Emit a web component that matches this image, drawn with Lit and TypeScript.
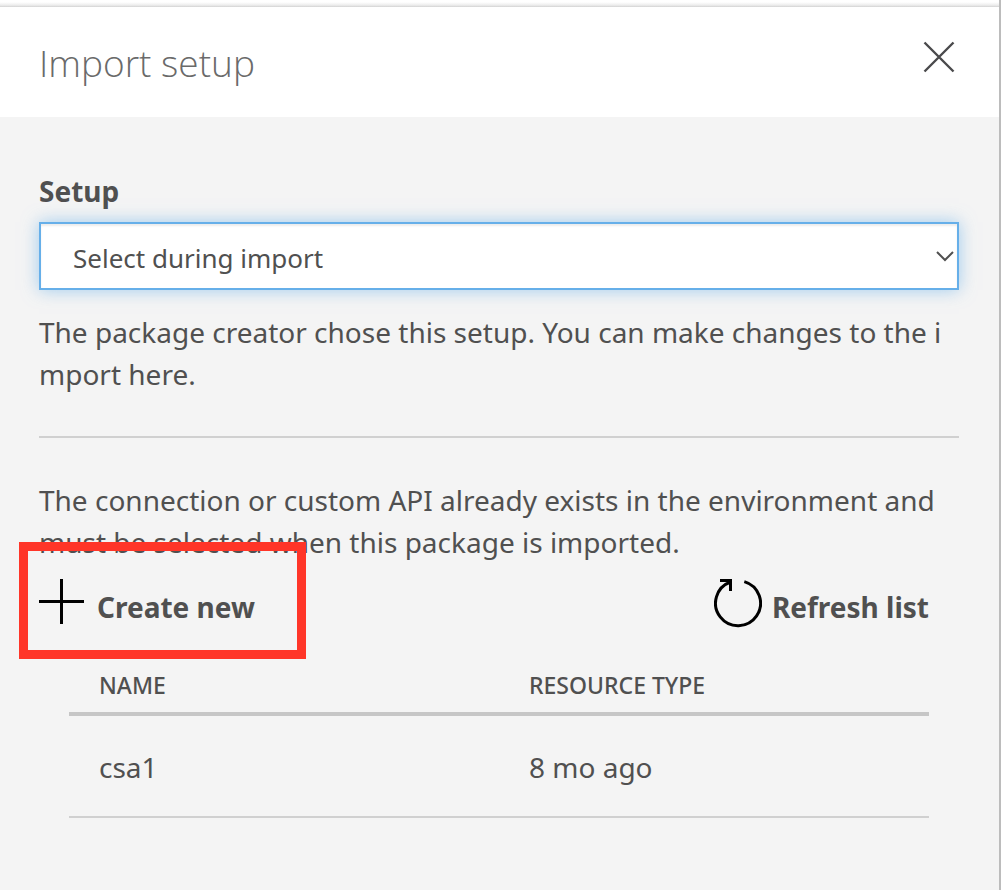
import { LitElement, html, css } from "lit";
import { customElement, property, state } from "lit/decorators.js";

interface Resource {
  name: string;
  type: string;
}

@customElement("resource-table")
class ResourceTable extends LitElement {
  @property({ attribute: false }) resources: Resource[] = [];

  static styles = css`
    :host {
      display: block;
    }
    .table {
      width: 100%;
      border-collapse: collapse;
      table-layout: fixed;
      text-align: left;
    }
    .heading {
      padding: 10px 30px 11px;
      border-bottom: 4px solid #c6c6c6;
      font-size: 23px;
      line-height: 32px;
      font-weight: 500;
      text-transform: uppercase;
    }
    .cell {
      padding: 30px 30px 28px;
      border-bottom: 2px solid #d0d0d0;
      line-height: 42px;
    }
  `;

  render() {
    return html`
      <table class="table">
        <thead>
          <tr>
            <th class="heading" scope="col">Name</th>
            <th class="heading" scope="col">Resource type</th>
          </tr>
        </thead>
        <tbody>
          ${this.resources.map(
            (r) => html`<tr>
              <td class="cell">${r.name}</td>
              <td class="cell">${r.type}</td>
            </tr>`
          )}
        </tbody>
      </table>
    `;
  }
}

@customElement("app-root")
class AppRoot extends LitElement {
  @state() private resources: Resource[] = [{ name: "csa1", type: "8 mo ago" }];

  static styles = css`
    :host {
      display: flex;
      flex-direction: column;
      box-sizing: border-box;
      min-height: 100vh;
      margin-right: 1px;
      border-right: 2px solid #bcbcbc;
      background: #f4f4f4;
      color: #505050;
      font-family: "Noto Sans", "Open Sans", sans-serif;
      font-size: 28px;
      line-height: 42px;
    }
    .edge {
      height: 7px;
      background: linear-gradient(#ffffff 30%, #ececec 75%, #d2d2d2);
    }
    .header {
      display: flex;
      justify-content: space-between;
      align-items: flex-start;
      padding: 28px 40px 26px 39px;
      background: #ffffff;
    }
    .title {
      margin: 0;
      font-family: "Open Sans", "Noto Sans", sans-serif;
      font-size: 37px;
      line-height: 56px;
      font-weight: 300;
      color: #6a6a6a;
    }
    .close {
      display: flex;
      margin: 2px 0 0;
      padding: 4px;
      border: 0;
      background: none;
      color: #4a4a4c;
    }
    .content {
      flex: 1;
      padding: 53px 40px 40px 39px;
    }
    .label {
      display: block;
      margin-bottom: 10px;
      font-weight: 700;
    }
    .field {
      position: relative;
    }
    .select {
      display: block;
      box-sizing: border-box;
      width: 100%;
      height: 68px;
      padding: 4px 48px 0 32px;
      border: 2px solid #66afe9;
      border-radius: 0;
      outline: 0;
      appearance: none;
      background: #ffffff;
      box-shadow: inset 0 2px 2px rgba(0, 0, 0, 0.08),
        0 0 16px rgba(102, 175, 233, 0.6);
      color: inherit;
      font: inherit;
      font-size: 26px;
    }
    .chevron {
      position: absolute;
      right: 4px;
      top: 28px;
      pointer-events: none;
    }
    .help {
      margin: 21px 0 41px;
      word-break: break-all;
    }
    .rule {
      height: 2px;
      margin: 0 0 41px;
      border: 0;
      background: #d0d0d0;
    }
    .note {
      margin: 0;
    }
    .actions {
      display: flex;
      justify-content: space-between;
      align-items: flex-start;
      padding: 15px 30px 31px 0;
    }
    .action {
      position: relative;
      display: flex;
      gap: 12px;
      padding: 0;
      border: 0;
      background: none;
      color: inherit;
      font: inherit;
      font-weight: 700;
    }
    .action-refresh {
      gap: 10px;
    }
    .action-text {
      padding-top: 8px;
    }
    .icon {
      color: #000000;
    }
    .highlight {
      position: absolute;
      inset: -36px -51px -31px -20px;
      border: 9px solid #ff3528;
      pointer-events: none;
    }
    .resources {
      margin: 0 30px;
    }
  `;

  render() {
    return html`
      <div class="edge"></div>
      <header class="header">
        <h1 class="title">Import setup</h1>
        <button class="close" aria-label="Close">
          <svg width="32" height="32" viewBox="0 0 32 32" fill="none" stroke="currentColor" stroke-width="2.4">
            <path d="M1.5 1.5 30.5 30.5M30.5 1.5 1.5 30.5" />
          </svg>
        </button>
      </header>
      <main class="content">
        <label class="label" for="setup">Setup</label>
        <div class="field">
          <select class="select" id="setup">
            <option>Select during import</option>
          </select>
          <svg class="chevron" width="20" height="14" viewBox="0 0 20 14" fill="none" stroke="#505050" stroke-width="2">
            <path d="M2 2 10 10 18 2" />
          </svg>
        </div>
        <p class="help">
          The package creator chose this setup. You can make changes to the import here.
        </p>
        <hr class="rule" />
        <p class="note">
          The connection or custom API already exists in the environment and must be selected when this package is imported.
        </p>
        <div class="actions">
          <button class="action">
            <svg class="icon" width="46" height="50" viewBox="0 0 46 50" fill="none" stroke="currentColor" stroke-width="3">
              <path d="M0 23.5H45M22.5 1V46" />
            </svg>
            <span class="action-text">Create new</span>
            <span class="highlight"></span>
          </button>
          <button class="action action-refresh">
            <svg class="icon" width="48" height="50" viewBox="0 0 48 50" fill="none" stroke="currentColor" stroke-width="3">
              <path d="M30.3 3.6A22.5 22.5 0 1 1 16.5 4" />
              <path d="M6 2.5H16.5V13" />
            </svg>
            <span class="action-text">Refresh list</span>
          </button>
        </div>
        <resource-table class="resources" .resources=${this.resources}></resource-table>
      </main>
    `;
  }
}
